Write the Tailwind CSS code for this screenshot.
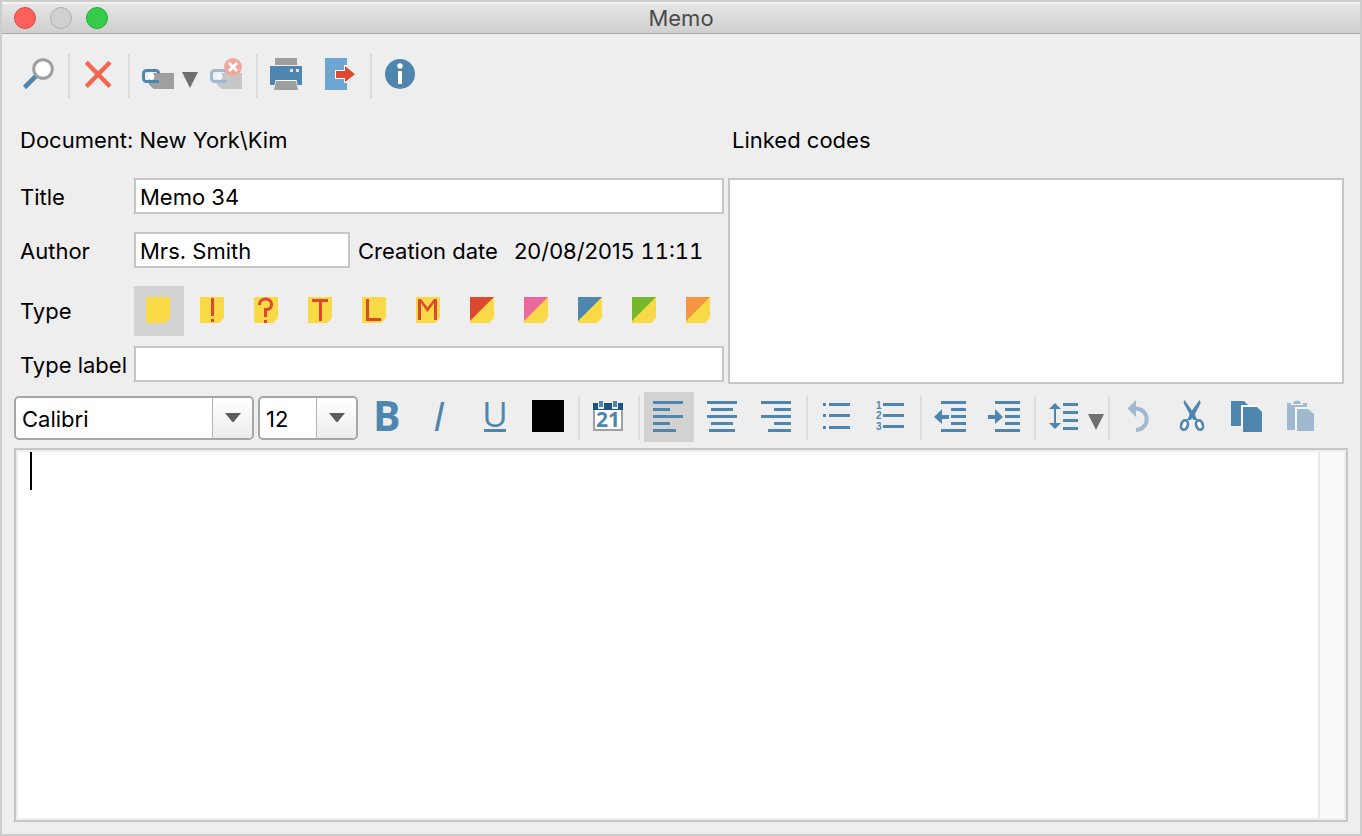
<!DOCTYPE html>
<html lang="en">
<head>
<meta charset="utf-8">
<meta name="viewport" content="width=device-width, initial-scale=1">
<title>Memo</title>
<script src="https://cdn.jsdelivr.net/npm/@tailwindcss/browser@4"></script>
</head>
<body class="flex min-h-screen flex-col border-2 border-[#cdcdcd] bg-[#eeeeee] font-['Inter','Liberation_Sans',sans-serif] text-[22px] leading-7 text-black">

<!-- Title bar -->
<header class="grid h-8 shrink-0 grid-cols-[1fr_auto_1fr] items-center border-t-2 border-b border-t-[#f4f4f4] border-b-[#a9a9a9] bg-linear-to-b from-[#e5e5e5] to-[#cfcfcf] px-3 pb-0.5">
  <div class="flex gap-3.5">
    <button type="button" aria-label="Close" class="size-[22px] rounded-full border border-[#e2443f] bg-[#ff615c]"></button>
    <button type="button" aria-label="Minimize" class="size-[22px] rounded-full border border-[#b1b1b1] bg-[#d0d0d0]"></button>
    <button type="button" aria-label="Zoom" class="size-[22px] rounded-full border border-[#24aa36] bg-[#35cc4b]"></button>
  </div>
  <h1 class="text-[#4a4a4a]">Memo</h1>
</header>

<main class="flex flex-1 flex-col px-3 pt-4 pb-3">

  <!-- Memo toolbar -->
  <div role="toolbar" aria-label="Memo" class="flex flex-wrap items-start gap-1">
    <button type="button" aria-label="Search"><svg class="block" width="50" height="50" viewBox="0 0 50 50"><path d="M10.500 37.500L22 26" stroke="#4f86b0" stroke-width="4.600"/><circle cx="29" cy="19" r="9.300" fill="#fff" stroke="#9f9f9f" stroke-width="3"/></svg></button>
    <span class="mt-1 h-11 w-0.5 bg-[#dcdcdc]"></span>
    <button type="button" aria-label="Delete memo"><svg class="block" width="50" height="50" viewBox="0 0 50 50"><path d="M12.300 12.300L36 36.500M36 12.300L12.300 36.500" stroke="#f3674e" stroke-width="4.400"/></svg></button>
    <span class="mt-1 h-11 w-0.5 bg-[#dcdcdc]"></span>
    <button type="button" aria-label="Link code"><svg class="block" width="64" height="50" viewBox="0 0 64 50"><path d="M19.500 23H40v16H19.500L15 34.500V27z" fill="#9f9f9f"/><ellipse cx="17.500" cy="26.500" rx="2.800" ry="3.500" fill="#fff"/><path d="M24.800 23.500a3 3 0 0 0-3.300-3h-9a3 3 0 0 0-3 3v5a3 3 0 0 0 3 3H25" fill="none" stroke="#4f86b0" stroke-width="3"/><path d="M48 22h16l-8 16z" fill="#707070"/></svg></button>
    <button type="button" aria-label="Remove linked code"><svg class="block" width="50" height="50" viewBox="0 0 50 50"><path d="M19.500 23H40v16H19.500L15 34.500V27z" fill="#c7c7c7"/><ellipse cx="17.500" cy="26.500" rx="2.800" ry="3.500" fill="#f7f7f7"/><path d="M24.800 23.500a3 3 0 0 0-3.300-3h-9a3 3 0 0 0-3 3v5a3 3 0 0 0 3 3H25" fill="none" stroke="#9fbbd0" stroke-width="3"/><circle cx="31" cy="17" r="9" fill="#f0a89b"/><path d="M27 13l8 8m0-8l-8 8" stroke="#fff" stroke-width="2.600"/></svg></button>
    <span class="mt-1 h-11 w-0.5 bg-[#dcdcdc]"></span>
    <button type="button" aria-label="Print"><svg class="block" width="50" height="50" viewBox="0 0 50 50"><path d="M13 8h22v7H13z" fill="#9f9f9f"/><path d="M8 16h32v19H8z" fill="#4f86b0"/><path d="M28 19h3v3h-3zM34 19h3v3h-3z" fill="#dce6ee"/><path d="M12.500 35l1-5h21l1 5z" fill="#fff"/><path d="M14 31h20l2 9H12z" fill="#9f9f9f"/></svg></button>
    <button type="button" aria-label="Export"><svg class="block" width="50" height="50" viewBox="0 0 50 50"><path d="M9 8h22v32H9z" fill="#6ea6d3"/><path d="M19 20h9v-5h3v18h-3v-4h-9z" fill="#fff"/><path d="M20 21h9v-5l10 8.300L29 32v-4h-9z" fill="#dd4930"/></svg></button>
    <span class="mt-1 h-11 w-0.5 bg-[#dcdcdc]"></span>
    <button type="button" aria-label="Info"><svg class="block" width="50" height="50" viewBox="0 0 50 50"><circle cx="24" cy="24" r="15" fill="#4f86b0"/><circle cx="24" cy="16" r="2.700" fill="#fff"/><path d="M22 21h4v13h-4z" fill="#fff"/></svg></button>
  </div>

  <!-- Memo properties -->
  <form class="mt-[26px] flex gap-1 pr-1 pl-1.5">
    <div class="grid flex-[704] grid-cols-[114px_1fr] content-start items-center">
      <p class="col-span-2 mb-6">Document: New York\Kim</p>

      <label for="title" class="mb-[18px] pt-0.5">Title</label>
      <input id="title" type="text" value="Memo 34" class="mb-[18px] h-9 w-full border-2 border-[#c6c6c6] bg-white px-1 pt-0.5 outline-none">

      <label for="author" class="mb-[18px] pt-0.5">Author</label>
      <div class="mb-[18px] flex items-center gap-2">
        <input id="author" type="text" value="Mrs. Smith" class="h-9 w-[216px] border-2 border-[#c6c6c6] bg-white px-1 pt-0.5 outline-none">
        <p class="flex gap-4 pt-0.5 whitespace-nowrap"><span>Creation date</span><time datetime="2015-08-20T11:11">20/08/2015 <span class="tabular-nums">11:11</span></time></p>
      </div>

      <span id="type-name" class="mb-2.5">Type</span>
      <div role="group" aria-labelledby="type-name" class="mb-2.5 flex gap-1">
        <button type="button" aria-label="Plain" aria-pressed="true" class="bg-[#d2d2d2]"><svg class="block" width="50" height="50" viewBox="0 0 50 50"><path d="M12 11h24v21l-5 5H12z" fill="#f9d946"/></svg></button>
        <button type="button" aria-label="Exclamation mark"><svg class="block" width="50" height="50" viewBox="0 0 50 50"><path d="M12 11h24v21l-5 5H12z" fill="#f9d946"/><path d="M23 12h3v18h-3zM23 33h3v3h-3z" fill="#dd4930"/></svg></button>
        <button type="button" aria-label="Question mark"><svg class="block" width="50" height="50" viewBox="0 0 50 50"><path d="M12 11h24v21l-5 5H12z" fill="#f9d946"/><path d="M17.500 19v-1a6 5 0 0 1 12 0v1a4.500 4.500 0 0 1-4.500 4.500h-1.500V31" fill="none" stroke="#dd4930" stroke-width="3"/><path d="M22 34h3v3h-3z" fill="#dd4930"/></svg></button>
        <button type="button" aria-label="Theory"><svg class="block" width="50" height="50" viewBox="0 0 50 50"><path d="M12 11h24v21l-5 5H12z" fill="#f9d946"/><path d="M16 14.500h16M24.500 14.500V35" stroke="#dd4930" stroke-width="3"/></svg></button>
        <button type="button" aria-label="Language"><svg class="block" width="50" height="50" viewBox="0 0 50 50"><path d="M12 11h24v21l-5 5H12z" fill="#f9d946"/><path d="M17.500 13v20.500H31" fill="none" stroke="#dd4930" stroke-width="3"/></svg></button>
        <button type="button" aria-label="Method"><svg class="block" width="50" height="50" viewBox="0 0 50 50"><path d="M12 11h24v21l-5 5H12z" fill="#f9d946"/><path d="M14 34V13h3l6.500 8.500L30 13h3v21h-3V17l-6.500 9L17 17v17z" fill="#dd4930"/></svg></button>
        <button type="button" aria-label="Red"><svg class="block" width="50" height="50" viewBox="0 0 50 50"><path d="M12 11h24v21l-5 5H12z" fill="#f9d946"/><path d="M12 11h24L12 35z" fill="#dd4930"/></svg></button>
        <button type="button" aria-label="Pink"><svg class="block" width="50" height="50" viewBox="0 0 50 50"><path d="M12 11h24v21l-5 5H12z" fill="#f9d946"/><path d="M12 11h24L12 35z" fill="#ec679c"/></svg></button>
        <button type="button" aria-label="Blue"><svg class="block" width="50" height="50" viewBox="0 0 50 50"><path d="M12 11h24v21l-5 5H12z" fill="#f9d946"/><path d="M12 11h24L12 35z" fill="#4f86b0"/></svg></button>
        <button type="button" aria-label="Green"><svg class="block" width="50" height="50" viewBox="0 0 50 50"><path d="M12 11h24v21l-5 5H12z" fill="#f9d946"/><path d="M12 11h24L12 35z" fill="#77b72b"/></svg></button>
        <button type="button" aria-label="Orange"><svg class="block" width="50" height="50" viewBox="0 0 50 50"><path d="M12 11h24v21l-5 5H12z" fill="#f9d946"/><path d="M12 11h24L12 35z" fill="#f5953f"/></svg></button>
      </div>

      <label for="type-label" class="pt-0.5 whitespace-nowrap">Type label</label>
      <input id="type-label" type="text" class="h-9 w-full border-2 border-[#c6c6c6] bg-white px-1 pt-0.5 outline-none">
    </div>

    <div class="flex flex-[616] flex-col">
      <h2 id="codes" class="mb-6 pl-1">Linked codes</h2>
      <div role="listbox" aria-labelledby="codes" class="h-[206px] border-2 border-[#c6c6c6] bg-white"></div>
    </div>
  </form>

  <!-- Formatting toolbar -->
  <div role="toolbar" aria-label="Formatting" class="mt-2 flex flex-wrap items-start gap-1">
    <div class="relative mt-1 h-11 w-60">
      <select aria-label="Font" class="size-full appearance-none rounded-[5px] border-2 border-[#a6a6a6] bg-white pt-0.5 pl-1.5 outline-none"><option>Calibri</option></select>
      <span class="pointer-events-none absolute inset-y-0.5 right-0.5 flex w-10 items-center justify-center rounded-r-[3px] border-l border-[#b5b5b5] bg-linear-to-b from-white to-[#ececec]"><svg width="16" height="10" viewBox="0 0 16 10"><path d="M0 0h16L9 8.500q-1 1-2 0z" fill="#5c5c5c"/></svg></span>
    </div>
    <div class="relative mt-1 h-11 w-[100px]">
      <select aria-label="Font size" class="size-full appearance-none rounded-[5px] border-2 border-[#a6a6a6] bg-white pt-0.5 pl-1.5 outline-none"><option>12</option></select>
      <span class="pointer-events-none absolute inset-y-0.5 right-0.5 flex w-10 items-center justify-center rounded-r-[3px] border-l border-[#b5b5b5] bg-linear-to-b from-white to-[#ececec]"><svg width="16" height="10" viewBox="0 0 16 10"><path d="M0 0h16L9 8.500q-1 1-2 0z" fill="#5c5c5c"/></svg></span>
    </div>
    <button type="button" aria-label="Bold"><svg class="block overflow-visible" width="50" height="50" viewBox="0 0 50 50"><text x="11" y="39" font-family="Open Sans" font-weight="700" font-size="41" fill="#4f86b0">B</text></svg></button>
    <button type="button" aria-label="Italic"><svg class="block overflow-visible" width="50" height="50" viewBox="0 0 50 50"><text x="17" y="39" font-family="Open Sans" font-style="italic" font-size="41" fill="#4f86b0">I</text></svg></button>
    <button type="button" aria-label="Underline"><svg class="block overflow-visible" width="50" height="50" viewBox="0 0 50 50"><text x="25" y="35" text-anchor="middle" font-family="Open Sans" font-weight="400" font-size="35" fill="#4f86b0">U</text><path d="M14 37h22v3H14z" fill="#4f86b0"/></svg></button>
    <button type="button" aria-label="Font color"><svg class="block" width="50" height="50" viewBox="0 0 50 50"><path d="M8 8h32v32H8z" fill="#000"/></svg></button>
    <span class="mt-1 h-11 w-0.5 bg-[#dcdcdc]"></span>
    <button type="button" aria-label="Insert date"><svg class="block" width="50" height="50" viewBox="0 0 50 50"><path d="M9 11h30v28H9z" fill="#a0a0a0"/><path d="M11 18h26v19H11z" fill="#fff"/><path d="M9 11h30v7H9z" fill="#1c5484"/><path d="M14 9h6v8h-6zM28 9h6v8h-6z" fill="#eee"/><path d="M15 9h4v6h-4zM29 9h4v6h-4z" fill="#4f86b0"/><text x="24" y="35" text-anchor="middle" font-family="Open Sans" font-weight="700" font-size="21" fill="#4f86b0">21</text></svg></button>
    <span class="mt-1 h-11 w-0.5 bg-[#dcdcdc]"></span>
    <button type="button" aria-label="Align left" aria-pressed="true" class="bg-[#d2d2d2]"><svg class="block" width="50" height="50" viewBox="0 0 50 50"><path d="M9 9h30v3H9zM9 16h17v3H9zM9 23h30v3H9zM9 30h17v3H9zM9 37h23v3H9z" fill="#4f86b0"/></svg></button>
    <button type="button" aria-label="Align center"><svg class="block" width="50" height="50" viewBox="0 0 50 50"><path d="M9 9h30v3H9zM13 16h22v3H13zM9 23h30v3H9zM13 30h22v3H13zM11 37h26v3H11z" fill="#4f86b0"/></svg></button>
    <button type="button" aria-label="Align right"><svg class="block" width="50" height="50" viewBox="0 0 50 50"><path d="M9 9h30v3H9zM22 16h17v3H22zM9 23h30v3H9zM22 30h17v3H22zM16 37h23v3H16z" fill="#4f86b0"/></svg></button>
    <span class="mt-1 h-11 w-0.5 bg-[#dcdcdc]"></span>
    <button type="button" aria-label="Bulleted list"><svg class="block" width="50" height="50" viewBox="0 0 50 50"><path d="M11 11h3v3h-3zM17 11h21v3H17zM11 22h3v3h-3zM17 22h21v3H17zM11 34h3v3h-3zM17 34h21v3H17z" fill="#4f86b0"/></svg></button>
    <button type="button" aria-label="Numbered list"><svg class="block" width="50" height="50" viewBox="0 0 50 50"><path d="M17 11h21v3H17zM17 22h21v3H17zM17 33h21v3H17z" fill="#4f86b0"/><g font-family="Liberation Sans" font-weight="700" font-size="10" fill="#4f86b0"><text x="10" y="17">1</text><text x="10" y="27">2</text><text x="10" y="38">3</text></g></svg></button>
    <span class="mt-1 h-11 w-0.5 bg-[#dcdcdc]"></span>
    <button type="button" aria-label="Decrease indent"><svg class="block" width="50" height="50" viewBox="0 0 50 50"><path d="M15 9h25v3H15zM25 16h15v3H25zM25 23h15v3H25zM25 30h15v3H25zM15 37h25v3H15zM8 25l8-8v6h7v4h-7v5z" fill="#4f86b0"/></svg></button>
    <button type="button" aria-label="Increase indent"><svg class="block" width="50" height="50" viewBox="0 0 50 50"><path d="M15 9h25v3H15zM25 16h15v3H25zM25 23h15v3H25zM25 30h15v3H25zM15 37h25v3H15zM23 25l-8-8v6H8v4h7v5z" fill="#4f86b0"/></svg></button>
    <span class="mt-1 h-11 w-0.5 bg-[#dcdcdc]"></span>
    <button type="button" aria-label="Line spacing"><svg class="block" width="64" height="50" viewBox="0 0 64 50"><path d="M23 11h15v3H23zM23 19h15v3H23zM23 27h15v3H23zM23 35h15v3H23zM15 11l6 6h-5v14h5l-6 6-6-6h5V17H9z" fill="#4f86b0"/><path d="M48 22h16l-8 16z" fill="#707070"/></svg></button>
    <span class="mt-1 h-11 w-0.5 bg-[#dcdcdc]"></span>
    <button type="button" aria-label="Undo"><svg class="block" width="50" height="50" viewBox="0 0 50 50"><path d="M22 16.500a10.700 10.700 0 0 1 0 21.400" fill="none" stroke="#9fbad0" stroke-width="4"/><path d="M13.500 16.500L22 8v17z" fill="#9fbad0"/></svg></button>
    <button type="button" aria-label="Cut"><svg class="block" width="50" height="50" viewBox="0 0 50 50"><path d="M16.500 8c-1.500 2-.8 3.500.5 5.500l4.500 8.500c-.5 3-1.500 4.500-3 6h4.500L24 26l1.500 2H30c-1.500-1.500-2.500-3-3-6l4.500-8.500c1.300-2 1.500-3.500 0-5.500L24 18.500z" fill="#4f86b0"/><ellipse cx="16.500" cy="33" rx="3.300" ry="4.800" transform="rotate(18 16.500 33)" fill="#fff" stroke="#4f86b0" stroke-width="2.600"/><ellipse cx="31.500" cy="33" rx="3.300" ry="4.800" transform="rotate(-18 31.500 33)" fill="#fff" stroke="#4f86b0" stroke-width="2.600"/></svg></button>
    <button type="button" aria-label="Copy"><svg class="block" width="50" height="50" viewBox="0 0 50 50"><path d="M9 9h13l4 4v21H9z" fill="#4f86b0"/><path d="M19 13h16v27H19z" fill="#fff"/><path d="M35 12h6v9l-6-6z" fill="#eee"/><path d="M21 15h14l5 5v20H21z" fill="#4f86b0"/><path d="M19 34h2v7h-2z" fill="#eee"/></svg></button>
    <button type="button" aria-label="Paste"><svg class="block" width="50" height="50" viewBox="0 0 50 50"><path d="M11 11h20v27H11z" fill="#9fbad0"/><path d="M15 11h12v2H15zM19 15h12v23H19z" fill="#f7f7f7"/><path d="M17 12a4 3.200 0 0 1 8 0z" fill="#9fbad0"/><path d="M21 17h11l6 5v17H21z" fill="#9fbad0"/></svg></button>
  </div>

  <!-- Memo text -->
  <div class="relative mt-1.5 flex flex-1 border-2 border-[#c6c6c6] bg-[#eeeeee] p-0.5">
    <textarea aria-label="Memo text" class="min-h-40 flex-1 resize-none bg-white px-3 outline-none"></textarea>
    <div class="w-[26px] border-l-2 border-[#e8e8e8] bg-[#fafafa]"></div>
    <span class="absolute top-0.5 left-3.5 h-[38px] w-0.5 bg-black"></span>
  </div>
</main>
</body>
</html>
